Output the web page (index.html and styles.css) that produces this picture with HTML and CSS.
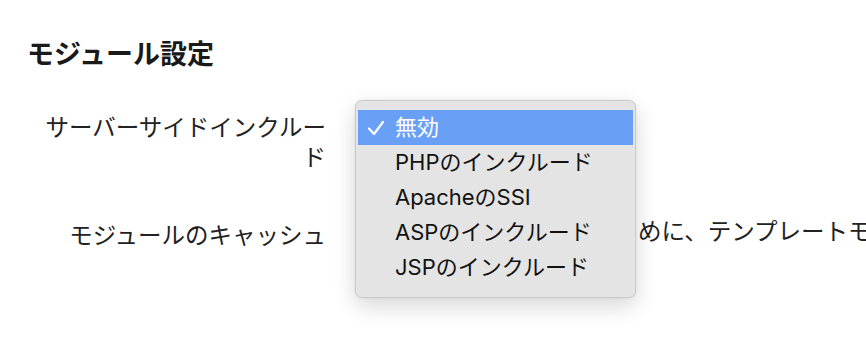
FILE: index.html
```html
<!DOCTYPE html>
<html>
<head>
    <title>モジュール設定</title>
    <link rel="stylesheet" href="styles.css">
</head>
<body>
    <div class="page">
        <h1 class="section-title">モジュール設定</h1>

        <div class="settings">
            <div class="label">サーバーサイドインクルード</div>
            <div class="control">
                <div class="select-stub"></div>
            </div>

            <div class="label">モジュールのキャッシュ</div>
            <div class="control">
                <span class="check-stub"></span>
                <span class="desc">パフォーマンス向上のた</span>
                <span class="desc">めに、テンプレートモジュールの出力をキャッシュします</span>
            </div>
        </div>
    </div>

    <!-- open native-style popup of the first select -->
    <div class="popup">
        <div class="popup-item selected">
            <svg class="tick" width="18" height="18" viewBox="0 0 18 18">
                <polyline points="2,9.5 7,15 16,3" fill="none" stroke="#fff" stroke-width="2.2" stroke-linecap="round" stroke-linejoin="round"/>
            </svg>
            無効
        </div>
        <div class="popup-item">PHPのインクルード</div>
        <div class="popup-item">ApacheのSSI</div>
        <div class="popup-item">ASPのインクルード</div>
        <div class="popup-item">JSPのインクルード</div>
    </div>
</body>
</html>
```

FILE: styles.css
```css
body {
    margin: 0;
    background: #fff;
    color: #1e1e1e;
    font-family: Inter, "Noto Sans CJK JP", sans-serif;
    overflow: hidden;
    width: 866px;
    height: 340px;
}
.page {
    padding: 36px 0 0 27px;
    white-space: nowrap;
}
.section-title {
    margin: 0;
    font-size: 27px;
    line-height: 38px;
    font-weight: bold;
    color: #1a1a1a;
}
.settings {
    display: grid;
    grid-template-columns: 290px 1fr;
    column-gap: 30px;
    row-gap: 48px;
    margin: 39px 0 0 9px;
}
.label {
    font-size: 23.5px;
    line-height: 30px;
    text-align: right;
    white-space: normal;
    color: #222;
}
.control {
    font-size: 23.5px;
    line-height: 30px;
    display: flex;
    align-items: center;
    gap: 10px;
    color: #222;
}
.select-stub {
    width: 200px;
    height: 30px;
}
.check-stub {
    display: inline-block;
    width: 4px;
    height: 20px;
    flex: none;
}
.desc {
    position: relative;
    top: -4px;
    flex: none;
}
.popup {
    position: absolute;
    left: 355px;
    top: 100px;
    width: 275px;
    padding: 9px 2px 12px 2px;
    background: #e4e4e4;
    border: 1px solid #cbcbcb;
    border-radius: 7px;
    box-shadow: 0 8px 22px rgba(0, 0, 0, 0.16), 0 0 3px rgba(0, 0, 0, 0.08);
    font-family: Inter, "Noto Sans CJK JP", sans-serif;
    font-size: 22px;
    color: #111;
}
.popup-item {
    position: relative;
    height: 35px;
    line-height: 35px;
    padding-left: 37px;
}
.popup-item.selected {
    background: #6a9ff6;
    color: #fff;
}
.tick {
    position: absolute;
    left: 9px;
    top: 9px;
}
```
